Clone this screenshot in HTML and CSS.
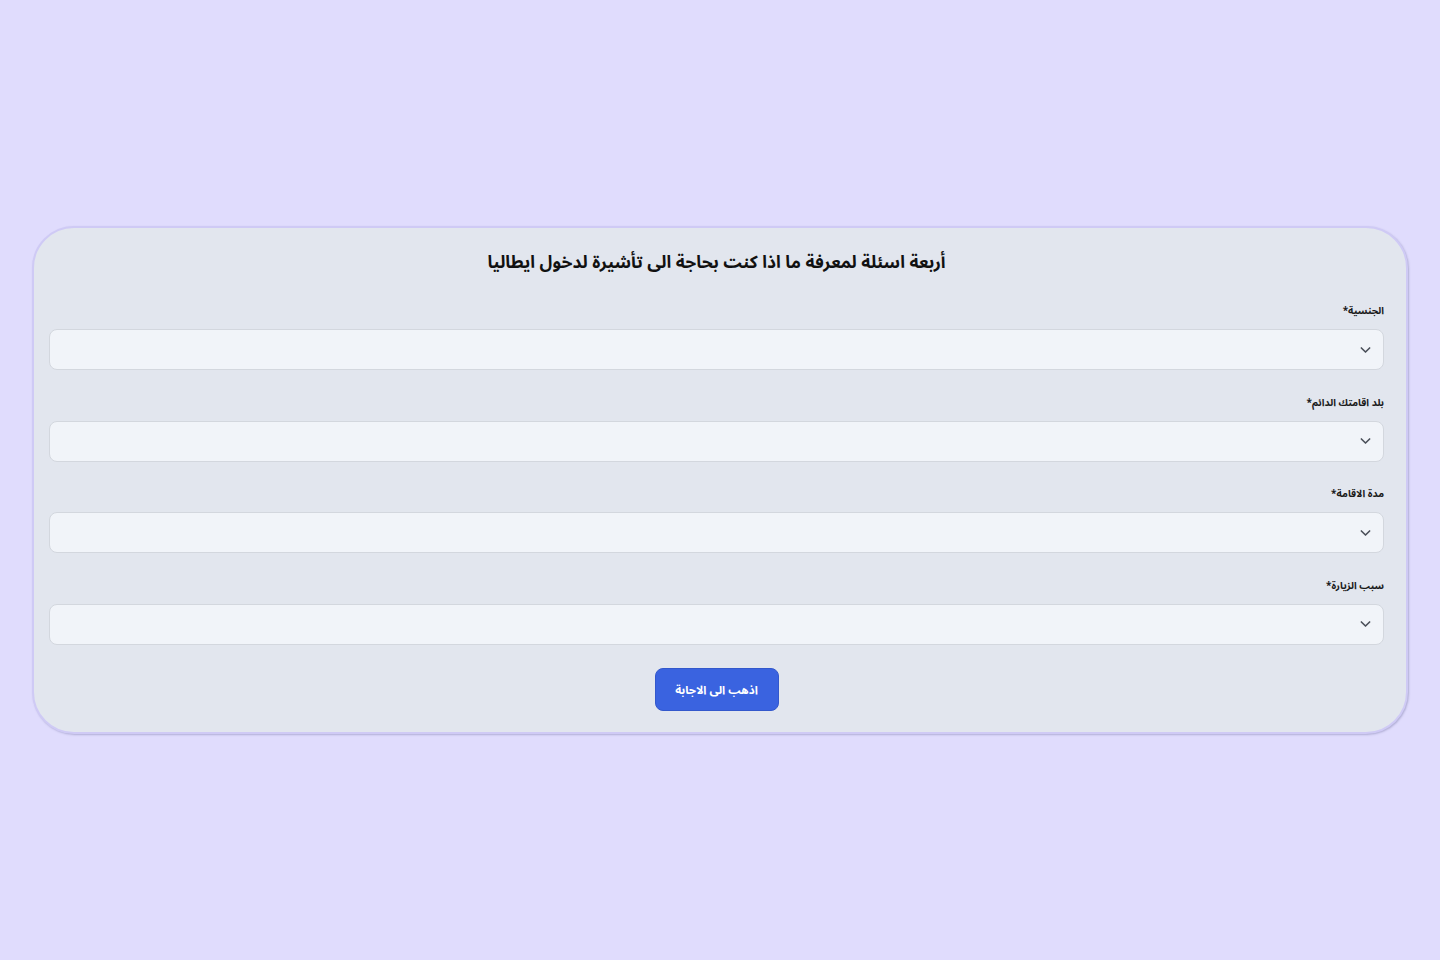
FILE: index.html
```html
<!DOCTYPE html>
<html lang="ar" dir="rtl">
<head>
<meta charset="utf-8">
<title>تأشيرة إيطاليا</title>
<link rel="stylesheet" href="styles.css">
</head>
<body>
<main class="page">
  <form class="card">
    <h1 class="title">أربعة اسئلة لمعرفة ما اذا كنت بحاجة الى تأشيرة لدخول ايطاليا</h1>
    <div class="field">
      <label class="label">الجنسية*</label>
      <div class="select"><svg class="chev" viewBox="0 0 12 8" width="11" height="8"><path d="M1.5 1.8 6 6.2l4.5-4.4" fill="none" stroke="#4a4f59" stroke-width="1.8" stroke-linecap="round" stroke-linejoin="round"/></svg></div>
    </div>
    <div class="field">
      <label class="label">بلد اقامتك الدائم*</label>
      <div class="select"><svg class="chev" viewBox="0 0 12 8" width="11" height="8"><path d="M1.5 1.8 6 6.2l4.5-4.4" fill="none" stroke="#4a4f59" stroke-width="1.8" stroke-linecap="round" stroke-linejoin="round"/></svg></div>
    </div>
    <div class="field">
      <label class="label">مدة الاقامة*</label>
      <div class="select"><svg class="chev" viewBox="0 0 12 8" width="11" height="8"><path d="M1.5 1.8 6 6.2l4.5-4.4" fill="none" stroke="#4a4f59" stroke-width="1.8" stroke-linecap="round" stroke-linejoin="round"/></svg></div>
    </div>
    <div class="field">
      <label class="label">سبب الزيارة*</label>
      <div class="select"><svg class="chev" viewBox="0 0 12 8" width="11" height="8"><path d="M1.5 1.8 6 6.2l4.5-4.4" fill="none" stroke="#4a4f59" stroke-width="1.8" stroke-linecap="round" stroke-linejoin="round"/></svg></div>
    </div>
    <div class="actions">
      <button type="button" class="btn">اذهب الى الاجابة</button>
    </div>
  </form>
</main>
</body>
</html>
```
FILE: styles.css
```css
* { box-sizing: border-box; }
html, body { margin: 0; padding: 0; }
body {
  background: #e0dcfd;
  font-family: "Noto Sans Arabic", "Noto Naskh Arabic", "DejaVu Sans", sans-serif;
  color: #111;
  min-height: 960px;
}
.page {
  display: flex;
  justify-content: center;
  padding-top: 226px;
}
.card {
  width: 1376px;
  background: #e2e6ee;
  border: 2px solid #cfcaf5;
  border-radius: 42px;
  box-shadow: 1px 1px 2px rgba(90, 90, 140, 0.35);
  padding: 21px 22px 21px 15px;
}
.title {
  margin: 0 0 25px;
  text-align: center;
  font-size: 17.4px;
  line-height: 28px;
  font-weight: 700;
  color: #111;
}
.field {
  display: flex;
  flex-direction: column;
  gap: 9px;
  margin-bottom: 23.5px;
}
.label {
  font-size: 10px;
  line-height: 18px;
  font-weight: 700;
  color: #1a1a1a;
}
.select {
  height: 41px;
  background: #f1f4f9;
  border: 1px solid #d3d7de;
  border-radius: 8px;
  display: flex;
  align-items: center;
  padding: 0 12px;
}
.chev { display: block; }
.actions {
  display: flex;
  justify-content: center;
}
.btn {
  width: 124px;
  height: 43px;
  background: #3a63e0;
  color: #fff;
  border: 1px solid #3358cc;
  border-radius: 8px;
  font-family: inherit;
  font-size: 11.5px;
  font-weight: 700;
}
```
